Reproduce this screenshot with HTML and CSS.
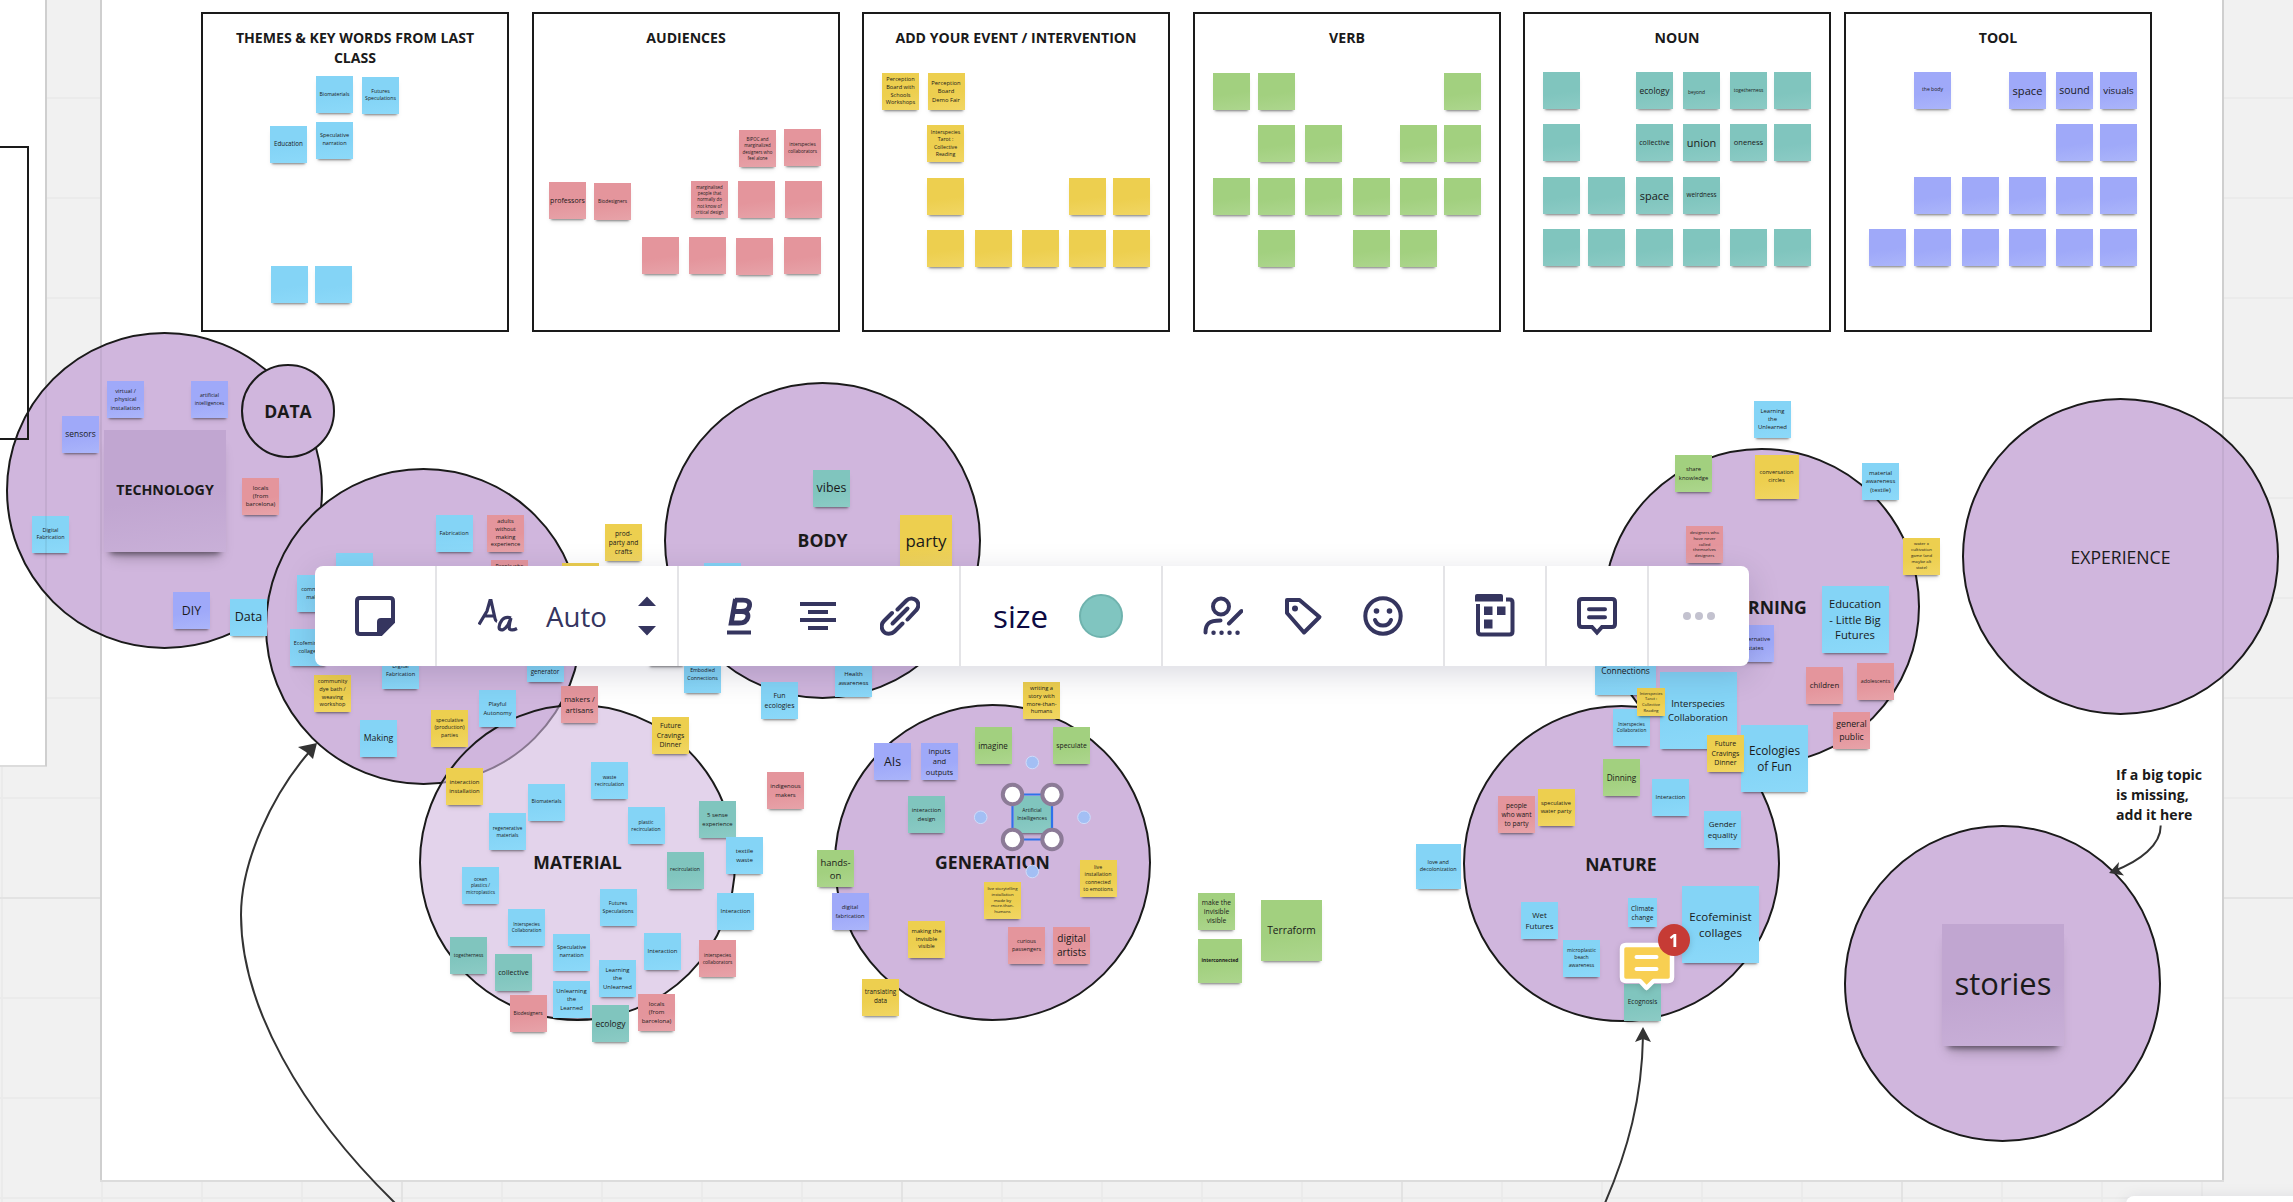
FILE: index.html
```html
<!DOCTYPE html>
<html lang="en">
<head>
<meta charset="utf-8">
<title>Workshop board</title>
<link rel="stylesheet" href="styles.css">
</head>
<body>
<main class="canvas">
  <div class="board board-prev"></div>
  <div class="board board-main"></div>

  <section class="column" style="--x:201"><h2>THEMES &amp; KEY WORDS FROM LAST CLASS</h2></section>
  <section class="column" style="--x:532"><h2>AUDIENCES</h2></section>
  <section class="column" style="--x:862"><h2>ADD YOUR EVENT / INTERVENTION</h2></section>
  <section class="column" style="--x:1193"><h2>VERB</h2></section>
  <section class="column" style="--x:1523"><h2>NOUN</h2></section>
  <section class="column" style="--x:1844"><h2>TOOL</h2></section>

  <div class="topic" style="--x:6;--y:331.5"></div>
  <div class="topic small" style="--x:241;--y:364">DATA</div>
  <div class="topic" style="--x:265;--y:468"></div>
  <div class="topic light" style="--x:419;--y:703.5">MATERIAL</div>
  <div class="topic" style="--x:664;--y:381.5">BODY</div>
  <div class="topic" style="--x:834;--y:703.5">GENERATION</div>
  <div class="topic" style="--x:1603;--y:448">LEARNING</div>
  <div class="topic" style="--x:1462.5;--y:705">NATURE</div>
  <div class="topic regular" style="--x:1962;--y:398">EXPERIENCE</div>
  <div class="topic" style="--x:1844;--y:825"></div>
  <div class="outline"></div>

  <svg class="connectors" viewBox="0 0 2293 1202" width="2293" height="1202">
    <g fill="none" stroke="#333" stroke-width="2">
      <path d="M395 1203C300 1110 241 1005 241 915C241 862 272 794 311 750"/>
      <path d="M1605 1203C1628 1150 1642 1098 1643 1036"/>
      <path d="M2160.700 825.500C2161 845 2140 861 2114 871"/>
    </g>
    <g fill="#333">
      <path d="M317 743L298 747L306 752L313 759Z"/>
      <path d="M1643 1027L1635 1042L1643 1039L1651 1042Z"/>
      <path d="M2109 873L2119 862L2118 869L2124 875.500Z"/>
    </g>
  </svg>

  <!-- Themes -->
  <div class="note blue" style="--x:316;--y:76;--f:5">Biomaterials</div>
  <div class="note blue" style="--x:362;--y:76.500;--f:5.1">Futures<br>Speculations</div>
  <div class="note blue" style="--x:270;--y:126;--f:6.1">Education</div>
  <div class="note blue" style="--x:316;--y:121.500;--f:5.4">Speculative<br>narration</div>
  <div class="note blue" style="--x:271;--y:266"></div>
  <div class="note blue" style="--x:315;--y:266"></div>

  <!-- Audiences -->
  <div class="note red" style="--x:739;--y:130;--f:4.3">BIPOC and<br>marginalized<br>designers who<br>feel alone</div>
  <div class="note red" style="--x:784;--y:129;--f:4.6">interspecies<br>collaborators</div>
  <div class="note red" style="--x:549;--y:182;--f:6.9">professors</div>
  <div class="note red" style="--x:594;--y:183;--f:4.7">Biodesigners</div>
  <div class="note red" style="--x:691;--y:181;--f:4.3">marginalised<br>people that<br>normally do<br>not know of<br>critical design</div>
  <div class="note red" style="--x:738;--y:181"></div>
  <div class="note red" style="--x:785;--y:181"></div>
  <div class="note red" style="--x:642;--y:237"></div>
  <div class="note red" style="--x:689;--y:237"></div>
  <div class="note red" style="--x:736;--y:237.500"></div>
  <div class="note red" style="--x:784;--y:237"></div>

  <!-- Events -->
  <div class="note yellow" style="--x:882;--y:73;--f:5.5">Perception<br>Board with<br>Schools<br>Workshops</div>
  <div class="note yellow" style="--x:927.500;--y:73;--f:5.7">Perception<br>Board<br>Demo Fair</div>
  <div class="note yellow" style="--x:927;--y:125;--f:5.1">Interspecies<br>Tarot :<br>Collective<br>Reading</div>
  <div class="note yellow" style="--x:927;--y:178"></div>
  <div class="note yellow" style="--x:1069;--y:178"></div>
  <div class="note yellow" style="--x:1113;--y:178"></div>
  <div class="note yellow" style="--x:927;--y:230"></div>
  <div class="note yellow" style="--x:975;--y:230"></div>
  <div class="note yellow" style="--x:1022;--y:230"></div>
  <div class="note yellow" style="--x:1069;--y:230"></div>
  <div class="note yellow" style="--x:1113;--y:230"></div>

  <!-- Verbs -->
  <div class="note green" style="--x:1213;--y:73"></div>
  <div class="note green" style="--x:1258;--y:73"></div>
  <div class="note green" style="--x:1443.500;--y:73"></div>
  <div class="note green" style="--x:1258;--y:125"></div>
  <div class="note green" style="--x:1305;--y:125"></div>
  <div class="note green" style="--x:1400;--y:125"></div>
  <div class="note green" style="--x:1443.500;--y:125"></div>
  <div class="note green" style="--x:1213;--y:178"></div>
  <div class="note green" style="--x:1258;--y:178"></div>
  <div class="note green" style="--x:1305;--y:178"></div>
  <div class="note green" style="--x:1353;--y:178"></div>
  <div class="note green" style="--x:1400;--y:178"></div>
  <div class="note green" style="--x:1443.500;--y:178"></div>
  <div class="note green" style="--x:1258;--y:230"></div>
  <div class="note green" style="--x:1353;--y:230"></div>
  <div class="note green" style="--x:1400;--y:230"></div>

  <!-- Nouns -->
  <div class="note teal" style="--x:1543;--y:72"></div>
  <div class="note teal" style="--x:1636;--y:72;--f:8.3">ecology</div>
  <div class="note teal nudged" style="--x:1683;--y:72;--f:4.8">beyond</div>
  <div class="note teal" style="--x:1730;--y:72;--f:4.7">togetherness</div>
  <div class="note teal" style="--x:1774;--y:72"></div>
  <div class="note teal" style="--x:1543;--y:124"></div>
  <div class="note teal" style="--x:1636;--y:124;--f:7">collective</div>
  <div class="note teal" style="--x:1683;--y:124;--f:10.8">union</div>
  <div class="note teal" style="--x:1730;--y:124;--f:7.4">oneness</div>
  <div class="note teal" style="--x:1774;--y:124"></div>
  <div class="note teal" style="--x:1543;--y:176.500"></div>
  <div class="note teal" style="--x:1588;--y:177"></div>
  <div class="note teal" style="--x:1636;--y:177;--f:10.8">space</div>
  <div class="note teal" style="--x:1683;--y:177;--f:6.2">weirdness</div>
  <div class="note teal" style="--x:1543;--y:229"></div>
  <div class="note teal" style="--x:1588;--y:229"></div>
  <div class="note teal" style="--x:1636;--y:229"></div>
  <div class="note teal" style="--x:1683;--y:229"></div>
  <div class="note teal" style="--x:1730;--y:229"></div>
  <div class="note teal" style="--x:1774;--y:229"></div>

  <!-- Tools -->
  <div class="note indigo" style="--x:1914;--y:71.500;--f:5">the body</div>
  <div class="note indigo" style="--x:2009;--y:72;--f:11">space</div>
  <div class="note indigo" style="--x:2056;--y:72;--f:10.3">sound</div>
  <div class="note indigo" style="--x:2100;--y:72;--f:9.6">visuals</div>
  <div class="note indigo" style="--x:2056;--y:124"></div>
  <div class="note indigo" style="--x:2100;--y:124"></div>
  <div class="note indigo" style="--x:1914;--y:177"></div>
  <div class="note indigo" style="--x:1962;--y:177"></div>
  <div class="note indigo" style="--x:2009;--y:177"></div>
  <div class="note indigo" style="--x:2056;--y:176.500"></div>
  <div class="note indigo" style="--x:2100;--y:176.500"></div>
  <div class="note indigo" style="--x:1869;--y:229"></div>
  <div class="note indigo" style="--x:1914;--y:229"></div>
  <div class="note indigo" style="--x:1962;--y:229"></div>
  <div class="note indigo" style="--x:2009;--y:229"></div>
  <div class="note indigo" style="--x:2056;--y:229"></div>
  <div class="note indigo" style="--x:2100;--y:229"></div>

  <!-- Technology -->
  <div class="note purple bold" style="--x:104;--y:430;--s:122;--f:14.1">TECHNOLOGY</div>
  <div class="note indigo" style="--x:107;--y:381;--f:5.7">virtual /<br>physical<br>installation</div>
  <div class="note indigo" style="--x:191;--y:381;--f:5">artificial<br>intelligences</div>
  <div class="note indigo" style="--x:62;--y:415.500;--f:8.3">sensors</div>
  <div class="note red" style="--x:242;--y:477.500;--f:5.9">locals<br>(from<br>barcelona)</div>
  <div class="note blue" style="--x:32;--y:515.500;--f:5.3">Digital<br>Fabrication</div>
  <div class="note indigo" style="--x:173;--y:592;--f:12.2">DIY</div>
  <div class="note blue" style="--x:230;--y:598.500;--f:12.4">Data</div>

  <!-- Making -->
  <div class="note blue" style="--x:435.500;--y:515;--f:5.5">Fabrication</div>
  <div class="note red" style="--x:487;--y:515;--f:5.6">adults<br>without<br>making<br>experience</div>
  <div class="note red top" style="--x:491;--y:560;--f:5">People who</div>
  <div class="note yellow" style="--x:562;--y:563"></div>
  <div class="note blue" style="--x:336;--y:553"></div>
  <div class="note blue" style="--x:297;--y:575;--f:5.3">community<br>making</div>
  <div class="note blue" style="--x:290;--y:629;--f:5.3">Ecofeminist<br>collages</div>
  <div class="note blue" style="--x:382;--y:652;--f:5.5">Digital<br>Fabrication</div>
  <div class="note blue bottom" style="--x:526.500;--y:645;--f:6.1">generator</div>
  <div class="note yellow" style="--x:605;--y:524;--f:6.5">prod-<br>party and<br>crafts</div>
  <div class="note yellow" style="--x:314;--y:675;--f:5.5">community<br>dye bath /<br>weaving<br>workshop</div>
  <div class="note blue" style="--x:360;--y:720;--f:8.6">Making</div>
  <div class="note yellow" style="--x:431;--y:709.500;--f:5.1">speculative<br>(production)<br>parties</div>
  <div class="note blue" style="--x:479;--y:690;--f:5.7">Playful<br>Autonomy</div>
  <div class="note blue" style="--x:648;--y:629"></div>

  <!-- Material -->
  <div class="note red" style="--x:561;--y:686;--f:7.4">makers /<br>artisans</div>
  <div class="note yellow" style="--x:652;--y:717;--f:6.8">Future<br>Cravings<br>Dinner</div>
  <div class="note yellow" style="--x:446;--y:768;--f:5.8">interaction<br>installation</div>
  <div class="note blue" style="--x:591;--y:762;--f:4.9">waste<br>recirculation</div>
  <div class="note blue" style="--x:528;--y:783.500;--f:5">Biomaterials</div>
  <div class="note blue" style="--x:489;--y:813;--f:4.9">regenerative<br>materials</div>
  <div class="note blue" style="--x:627.500;--y:807;--f:4.9">plastic<br>recirculation</div>
  <div class="note teal" style="--x:699;--y:801;--f:5.8">5 sense<br>experience</div>
  <div class="note teal" style="--x:666.500;--y:851.500;--f:5">recirculation</div>
  <div class="note blue" style="--x:726;--y:837;--f:6">textile<br>waste</div>
  <div class="note blue" style="--x:462;--y:867;--f:4.6">ocean<br>plastics /<br>microplastics</div>
  <div class="note blue" style="--x:599.500;--y:889;--f:5.1">Futures<br>Speculations</div>
  <div class="note blue" style="--x:717;--y:893;--f:5.8">Interaction</div>
  <div class="note blue" style="--x:508;--y:908.500;--f:4.6">Interspecies<br>Collaboration</div>
  <div class="note teal" style="--x:450;--y:936.500;--f:4.7">togetherness</div>
  <div class="note teal" style="--x:495;--y:954;--f:7">collective</div>
  <div class="note blue" style="--x:553;--y:933.500;--f:5.4">Speculative<br>narration</div>
  <div class="note blue" style="--x:644;--y:933;--f:5.8">Interaction</div>
  <div class="note red" style="--x:699;--y:940;--f:4.7">interspecies<br>collaborators</div>
  <div class="note blue" style="--x:553;--y:981;--f:5.8">Unlearning<br>the<br>Learned</div>
  <div class="note blue" style="--x:599;--y:960;--f:5.8">Learning<br>the<br>Unlearned</div>
  <div class="note red" style="--x:509.500;--y:994.500;--f:4.7">Biodesigners</div>
  <div class="note red" style="--x:638;--y:994;--f:5.9">locals<br>(from<br>barcelona)</div>
  <div class="note teal" style="--x:592;--y:1005;--f:8.4">ecology</div>
  <div class="note red" style="--x:767;--y:772;--f:5.8">indigenous<br>makers</div>

  <!-- Body -->
  <div class="note teal" style="--x:813;--y:469.500;--f:12.3">vibes</div>
  <div class="note yellow" style="--x:900;--y:515;--s:52;--f:16.7">party</div>
  <div class="note blue" style="--x:704;--y:563"></div>
  <div class="note blue" style="--x:684;--y:656;--f:5.1">Embodied<br>Connections</div>
  <div class="note blue" style="--x:761;--y:682;--f:6.8">Fun<br>ecologies</div>
  <div class="note blue" style="--x:835;--y:660;--f:5.9">Health<br>awareness</div>

  <!-- Generation -->
  <div class="note yellow" style="--x:1023;--y:682;--f:5.6">writing a<br>story with<br>more-than-<br>humans</div>
  <div class="note green" style="--x:974.500;--y:727;--f:7.9">imagine</div>
  <div class="note green" style="--x:1053;--y:727;--f:6.7">speculate</div>
  <div class="note indigo" style="--x:874;--y:743;--f:12.3">AIs</div>
  <div class="note indigo" style="--x:921;--y:743;--f:7.4">inputs<br>and<br>outputs</div>
  <div class="note teal" style="--x:908;--y:796;--f:5.7">interaction<br>design</div>
  <div class="note green" style="--x:817;--y:850;--f:9.3">hands-<br>on</div>
  <div class="note indigo" style="--x:831.500;--y:893;--f:5.7">digital<br>fabrication</div>
  <div class="note yellow" style="--x:908;--y:921;--f:5.6">making the<br>invisible<br>visible</div>
  <div class="note yellow" style="--x:862;--y:978.500;--f:6.2">translating<br>data</div>
  <div class="note yellow" style="--x:984;--y:882;--f:4.2">live storytelling<br>installation<br>made by<br>more-than-<br>humans</div>
  <div class="note yellow" style="--x:1079.500;--y:860;--f:5.1">live<br>installation<br>connected<br>to emotions</div>
  <div class="note red" style="--x:1008;--y:927;--f:5.4">curious<br>passengers</div>
  <div class="note red" style="--x:1053;--y:927;--f:10">digital<br>artists</div>
  <div class="note green" style="--x:1198;--y:893;--f:6.6">make the<br>invisible<br>visible</div>
  <div class="note green bold" style="--x:1198;--y:938.500;--s:44;--f:4.7">interconnected</div>
  <div class="note green" style="--x:1261;--y:899.500;--s:61;--f:10.1">Terraform</div>

  <!-- Learning -->
  <div class="note blue" style="--x:1754;--y:400.500;--f:5.8">Learning<br>the<br>Unlearned</div>
  <div class="note green" style="--x:1675;--y:455;--f:5.7">share<br>knowledge</div>
  <div class="note yellow" style="--x:1754.500;--y:455;--s:44;--f:5.5">conversation<br>circles</div>
  <div class="note blue" style="--x:1862;--y:463;--f:5.8">material<br>awareness<br>(textile)</div>
  <div class="note red" style="--x:1686;--y:526;--f:4.2">designers who<br>have never<br>called<br>themselves<br>designers</div>
  <div class="note yellow" style="--x:1903;--y:537.500;--f:4.2">water x<br>cultivation<br>game (and<br>maybe alt<br>state)</div>
  <div class="note blue" style="--x:1821.500;--y:586;--s:67;--f:11.1">Education<br>- Little Big<br>Futures</div>
  <div class="note indigo" style="--x:1737;--y:625;--f:5.7">Alternative<br>states</div>
  <div class="note blue" style="--x:1595;--y:634;--s:61;--f:8.3">Embodied<br>Connections</div>
  <div class="note red" style="--x:1806;--y:667;--f:7.7">children</div>
  <div class="note red" style="--x:1857;--y:663;--f:5.2">adolescents</div>
  <div class="note red" style="--x:1833;--y:712;--f:8.6">general<br>public</div>
  <div class="note blue" style="--x:1659.500;--y:672;--s:77;--f:9.4">Interspecies<br>Collaboration</div>

  <!-- Nature -->
  <div class="note blue" style="--x:1613;--y:708.500;--f:4.6">Interspecies<br>Collaboration</div>
  <div class="note yellow" style="--x:1637;--y:688;--s:28;--f:3.9">Interspecies<br>Tarot :<br>Collective<br>Reading</div>
  <div class="note blue" style="--x:1741;--y:724.500;--s:67;--f:11.7">Ecologies<br>of Fun</div>
  <div class="note yellow" style="--x:1707;--y:735;--f:6.9">Future<br>Cravings<br>Dinner</div>
  <div class="note green" style="--x:1603;--y:759;--f:8.1">Dinning</div>
  <div class="note blue" style="--x:1652;--y:779;--f:5.8">Interaction</div>
  <div class="note red" style="--x:1498;--y:796;--f:6.5">people<br>who want<br>to party</div>
  <div class="note yellow" style="--x:1537.500;--y:789;--f:5.6">speculative<br>water party</div>
  <div class="note blue" style="--x:1704;--y:811;--f:7.8">Gender<br>equality</div>
  <div class="note blue" style="--x:1415.500;--y:843.500;--s:45.500;--f:5.3">love and<br>decolonization</div>
  <div class="note blue" style="--x:1521;--y:902;--f:7.8">Wet<br>Futures</div>
  <div class="note blue" style="--x:1563;--y:939.500;--f:5">microplastic<br>beach<br>awareness</div>
  <div class="note blue" style="--x:1628;--y:898;--s:29;--f:6.4">Climate<br>change</div>
  <div class="note blue" style="--x:1682;--y:886;--s:77;--f:11.4">Ecofeminist<br>collages</div>
  <div class="note teal" style="--x:1624;--y:984;--f:6.3">Ecognosis</div>

  <div class="note purple" style="--x:1942;--y:923.500;--s:122;--f:30.8">stories</div>
  <p class="hint">If a big topic<br>is missing,<br>add it here</p>

  <!-- Frame edges run over everything that lies on them -->
  <div class="edge edge-prev"></div>
  <div class="edge edge-left"></div>
  <div class="edge edge-right"></div>

  <!-- Selected note -->
  <div class="note teal" style="--x:1013.500;--y:796;--f:5">Artificial<br>Intelligences</div>
  <svg class="selection" viewBox="970 750 126 132" width="126" height="132">
    <path d="M1012.500 794.500H1052V839.500H1012.500Z" fill="none" stroke="#2f72ea" stroke-width="2.200"/>
    <g fill="#fff" stroke="#8c7b97" stroke-width="4">
      <circle cx="1012.500" cy="794.500" r="9.700"/><circle cx="1052" cy="794.500" r="9.700"/>
      <circle cx="1012.500" cy="839.500" r="9.700"/><circle cx="1052" cy="839.500" r="9.700"/>
    </g>
    <g fill="#a3bff4" stroke="#cfdcfa">
      <circle cx="1032.300" cy="762.500" r="6.300"/><circle cx="980.700" cy="817.300" r="6.300"/>
      <circle cx="1084" cy="817.300" r="6.300"/><circle cx="1032.300" cy="871.500" r="6.300"/>
    </g>
  </svg>

  <div class="pin">
    <svg viewBox="0 0 60 56" width="60" height="56">
      <path d="M8 4H50Q54 4 54 8V36Q54 40 50 40H35.500L28.500 47L22 40H8Q4 40 4 36V8Q4 4 8 4Z" fill="#f8cf52" stroke="#fff" stroke-width="4.500" stroke-linejoin="round"/>
      <path d="M18.500 16H38.500M18.500 28H38.500" stroke="#fff" stroke-width="4" stroke-linecap="round"/>
    </svg>
    <span class="badge">1</span>
  </div>

  <nav class="toolbar">
    <div class="group g-note">
      <svg viewBox="0 0 40 40" width="40" height="40"><path d="M5 2H35Q38 2 38 5V26L26 38H5Q2 38 2 35V5Q2 2 5 2Z" fill="none" stroke="currentColor" stroke-width="4"/><path d="M39 22H26Q22 22 22 26V39H26L39 26Z" fill="currentColor"/></svg>
    </div>
    <div class="group g-font">
      <svg viewBox="0 0 40 34" width="40" height="34" fill="none" stroke="currentColor" stroke-width="3.200"><path d="M1 25.500L9 12L12 1.500H13L17 19.500Q17.500 22 19 22.500M6 17H17"/><path d="M33 19Q27.500 17 24 21Q20 26.500 21.500 30Q25 33 30 26L33 19Q30.500 27 31.500 30Q34 32 39 29.500"/></svg>
      <span class="size-value">Auto</span>
      <svg class="stepper" viewBox="0 0 20 40" width="20" height="40" fill="currentColor"><path d="M10 .5L19 10H1ZM10 39.500L1 30H19Z"/></svg>
    </div>
    <div class="group g-style">
      <svg viewBox="0 0 28 38" width="28" height="38" fill="none" stroke="currentColor" stroke-width="4"><path d="M1 35.500H25"/><path d="M9 3.200H17Q24.500 3.200 23.500 9Q22.500 14.500 15 14.500H8.500M16 14.500Q23 15 21.800 20.500Q20.500 26 13 26H5.200L9.500 2" stroke-width="4.800"/></svg>
      <svg viewBox="0 0 36 30" width="36" height="30" stroke="currentColor" stroke-width="4"><path d="M0 3H36M8 11H28M0 19H36M8 27H28"/></svg>
      <svg viewBox="0 0 40 40" width="40" height="40" fill="none" stroke="currentColor" stroke-width="4" stroke-linecap="round"><path d="M12.500 27.500L27.500 12.500"/><path d="M17.500 13.500L26.500 4.500C29.500 1.500 34 2 36.500 4.500S39 11.500 36 14.500L27.500 23.500"/><path d="M12 17L4 25C1 28 1 32.500 3.500 35.500S11.500 38.500 14.500 35.500L22.500 27.500"/></svg>
    </div>
    <div class="group g-size"><span>size</span><i class="swatch"></i></div>
    <div class="group g-meta">
      <svg viewBox="0 0 40 40" width="40" height="40" fill="none" stroke="currentColor" stroke-width="4" stroke-linecap="round"><circle cx="18" cy="10.500" r="8"/><path d="M2.500 36.500C2.500 28 6 24.500 17.500 24.500M26 27.500L38.500 15"/><path d="M10.500 36.800h.1M18.500 36.800h.1M26.500 36.800h.1M34.500 36.800h.1" stroke-width="4.400"/></svg>
      <svg viewBox="0 0 40 40" width="40" height="40" fill="none" stroke="currentColor" stroke-width="4" stroke-linejoin="round"><path d="M4 4H16.500L36.500 21L21 36.500L4 17Z"/><circle cx="12" cy="12.500" r="3" fill="currentColor" stroke="none"/></svg>
      <svg viewBox="0 0 40 40" width="40" height="40" fill="none" stroke="currentColor" stroke-width="4" stroke-linecap="round"><circle cx="20" cy="20" r="17.700"/><path d="M12 24Q14 29.500 20 29.500T28 24"/><g fill="currentColor" stroke="none"><circle cx="13.500" cy="15" r="2.800"/><circle cx="26.500" cy="15" r="2.800"/></g></svg>
    </div>
    <div class="group g-app">
      <svg viewBox="0 0 40 44" width="40" height="44" fill="currentColor"><path d="M0 2Q0 0 2 0H26Q28 0 28 2V7.500H0Z"/><path d="M31 5.500H34.500Q37.500 5.500 37.500 8.500V37.500Q37.500 40.500 34.500 40.500H6Q3 40.500 3 37.500V10" fill="none" stroke="currentColor" stroke-width="4"/><path d="M9 12.500h8.500v8.500H9zM22 12.500h8.500v8.500H22zM9 25.500h8.500v9H9z"/></svg>
    </div>
    <div class="group g-comment">
      <svg viewBox="0 0 40 40" width="40" height="40" fill="none" stroke="currentColor" stroke-width="4"><path d="M5 3H35Q38 3 38 6V28Q38 31 35 31H25L20 36.500L15 31H5Q2 31 2 28V6Q2 3 5 3Z"/><path d="M12 13.300H28M12 21.300H28" stroke-linecap="round"/></svg>
    </div>
    <div class="group g-more"><i></i><i></i><i></i></div>
  </nav>

  <div class="zoom-panel"></div>
</main>
</body>
</html>
```
FILE: styles.css
```css
* { box-sizing: border-box; }

body {
  margin: 0;
  width: 2293px;
  height: 1202px;
  overflow: hidden;
  font-family: "Open Sans", "Noto Sans", sans-serif;
  color: #1a1a1a;
}

.canvas {
  position: relative;
  width: 2293px;
  height: 1202px;
  overflow: hidden;
  background-color: #f1f1f1;
  background-image:
    linear-gradient(#e3e3e3 2px, transparent 2px),
    linear-gradient(90deg, #e3e3e3 2px, transparent 2px),
    linear-gradient(#ebebeb 2px, transparent 2px),
    linear-gradient(90deg, #ebebeb 2px, transparent 2px);
  background-size: 100% 500px, 500px 100%, 100% 100px, 100px 100%;
  background-position: 0 397px, 401px 0, 0 97px, 1px 0;
}

.board { position: absolute; background: #fff; border: 2px solid #dcdcdc; }
.board-prev { left: -4px; top: -4px; width: 51px; height: 771px; }
.board-main { left: 100px; top: -4px; width: 2124px; height: 1186px; }

.edge { position: absolute; top: 0; width: 2px; background: rgba(0, 0, 0, .06); }
.edge-prev { left: 45px; height: 766px; }
.edge-left { left: 100px; height: 1180px; }
.edge-right { left: 2222px; height: 1180px; }

.outline {
  position: absolute;
  left: -10px;
  top: 146px;
  width: 39px;
  height: 294px;
  border: 2px solid #1a1a1a;
}

.column {
  position: absolute;
  left: calc(var(--x) * 1px);
  top: 12px;
  width: 308px;
  height: 320px;
  border: 2px solid #1a1a1a;
  padding: 14px 20px;
}
.column h2 {
  margin: 0;
  font-size: 14.1px;
  line-height: 20px;
  font-weight: 700;
  text-align: center;
}

.topic {
  position: absolute;
  left: calc(var(--x) * 1px);
  top: calc(var(--y) * 1px);
  width: 317px;
  height: 317px;
  border: 2px solid #1a1a1a;
  border-radius: 50%;
  background: #d0b6dd;
  display: flex;
  align-items: center;
  justify-content: center;
  font-size: 17.6px;
  font-weight: 700;
}
.topic.small { width: 94px; height: 94px; }
.topic.light { background: rgba(208, 182, 221, .6); }
.topic.regular { font-weight: 400; }

.connectors { position: absolute; left: 0; top: 0; }

.note {
  --s: 37;
  --f: 6;
  position: absolute;
  left: calc(var(--x) * 1px);
  top: calc(var(--y) * 1px);
  width: calc(var(--s) * 1px);
  height: calc(var(--s) * 1px);
  display: flex;
  align-items: center;
  justify-content: center;
  font-size: calc(var(--f) * 1px + .12px);
  line-height: 1.38;
  text-align: center;
  white-space: nowrap;
  background: linear-gradient(172deg, var(--c) 55%, var(--d));
  box-shadow: 0 3px 2px -2px rgba(0, 0, 0, .42), 0 4px 5px -2px rgba(0, 0, 0, .15);
}
.blue { --c: #84d4f6; --d: #8cd9f9; }
.red { --c: #e4959c; --d: #e7a3a9; }
.yellow { --c: #edcf4f; --d: #f1d663; }
.green { --c: #a2d07f; --d: #add68e; }
.teal { --c: #80c5be; --d: #8ccbc5; }
.indigo { --c: #9fa9f9; --d: #abb5fa; }
.purple {
  --c: #c1a6d1;
  --d: #c9b0d8;
  padding-bottom: 3px;
  box-shadow: 0 8px 6px -6px rgba(0, 0, 0, .5), 0 12px 14px -8px rgba(0, 0, 0, .25);
}
.bold { font-weight: 700; }
.nudged { padding: 4px 10px 0 0; }
.top { align-items: flex-start; padding-top: 3px; }
.bottom { align-items: flex-end; padding-bottom: 5.500px; }

.hint {
  position: absolute;
  left: 2116px;
  top: 765px;
  margin: 0;
  font-size: 14.1px;
  line-height: 20px;
  font-weight: 700;
  white-space: nowrap;
}

.selection { position: absolute; left: 970px; top: 750px; }

.pin { position: absolute; left: 1618px; top: 941px; filter: drop-shadow(0 2px 3px rgba(0, 0, 0, .15)); }
.pin svg { display: block; }
.badge {
  position: absolute;
  left: 40px;
  top: -17px;
  width: 32px;
  height: 32px;
  border-radius: 50%;
  background: #c63b35;
  color: #fff;
  font-size: 18px;
  font-weight: 700;
  line-height: 32px;
  text-align: center;
}

.toolbar {
  position: absolute;
  left: 315px;
  top: 566px;
  width: 1434px;
  height: 100px;
  display: flex;
  background: #fff;
  border-radius: 8px;
  color: #35355f;
  box-shadow: 0 8px 32px rgba(5, 0, 56, .15);
}
.group {
  display: flex;
  align-items: center;
  justify-content: center;
  border-right: 2px solid #e4e4e7;
}
.group svg { display: block; flex: none; }
.g-note { width: 122px; }
.g-font { width: 242px; padding-left: 21px; }
.size-value { margin: 0 30px 0 28px; font-size: 27.6px; }
.g-style { width: 282px; gap: 44px; padding-left: 8px; }
.g-style svg:first-child { margin-right: 2px; }
.g-size { width: 202px; gap: 31px; padding-right: 6px; font-size: 31.3px; color: #0d0a43; }
.swatch { width: 44px; height: 44px; border-radius: 50%; background: #80c5c0; border: 2px solid #6fb3ae; }
.g-meta { width: 282px; gap: 40px; }
.g-app { width: 102px; }
.g-comment { width: 102px; }
.g-more { width: 100px; gap: 4px; border: 0; }
.g-more i { width: 8px; height: 8px; border-radius: 50%; background: #c3c2cf; }

.zoom-panel {
  position: absolute;
  left: 2126px;
  top: 1196px;
  width: 200px;
  height: 40px;
  border-radius: 8px;
  background: #fff;
  box-shadow: 0 2px 16px rgba(5, 0, 56, .1);
}
```
